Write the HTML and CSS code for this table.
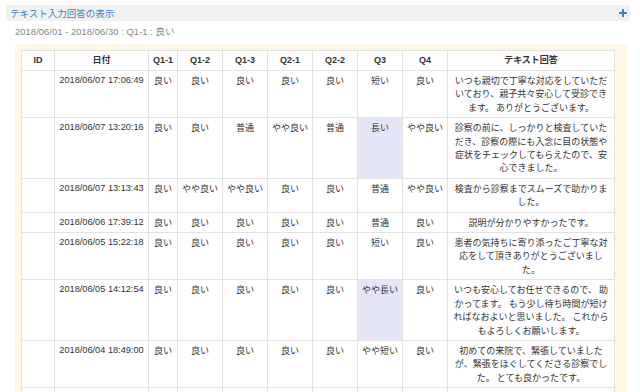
FILE: index.html
```html
<!DOCTYPE html>
<html lang="ja">
<head>
<meta charset="utf-8">
<link rel="stylesheet" href="styles.css">
</head>
<body>
<div class="panel-head">
  <span class="panel-title">テキスト入力回答の表示</span>
  <svg class="plus" width="8" height="8" viewBox="0 0 8 8"><rect x="3" y="0" width="2" height="8" fill="#3d82c4"/><rect x="0" y="3" width="8" height="2" fill="#3d82c4"/></svg>
</div>
<div class="subtitle">2018/06/01 - 2018/06/30 : Q1-1 : 良い</div>
<div class="box">
  <table class="answers">
    <colgroup>
      <col class="c-id"><col class="c-date"><col class="c-q11"><col class="c-q"><col class="c-q"><col class="c-q"><col class="c-q"><col class="c-q"><col class="c-q"><col>
    </colgroup>
    <thead>
      <tr><th>ID</th><th>日付</th><th>Q1-1</th><th>Q1-2</th><th>Q1-3</th><th>Q2-1</th><th>Q2-2</th><th>Q3</th><th>Q4</th><th>テキスト回答</th></tr>
    </thead>
    <tbody>
      <tr><td></td><td>2018/06/07 17:06:49</td><td>良い</td><td>良い</td><td>良い</td><td>良い</td><td>良い</td><td>短い</td><td>良い</td><td>いつも親切で丁寧な対応をしていただいており、親子共々安心して受診できます。 ありがとうございます。</td></tr>
      <tr><td></td><td>2018/06/07 13:20:16</td><td>良い</td><td>良い</td><td>普通</td><td>やや良い</td><td>普通</td><td class="hl">長い</td><td>やや良い</td><td>診察の前に、しっかりと検査していただき、診察の際にも入念に目の状態や症状をチェックしてもらえたので、安心できました。</td></tr>
      <tr><td></td><td>2018/06/07 13:13:43</td><td>良い</td><td>やや良い</td><td>やや良い</td><td>良い</td><td>良い</td><td>普通</td><td>やや良い</td><td>検査から診察までスムーズで助かりました。</td></tr>
      <tr><td></td><td>2018/06/06 17:39:12</td><td>良い</td><td>良い</td><td>良い</td><td>良い</td><td>良い</td><td>普通</td><td>良い</td><td>説明が分かりやすかったです。</td></tr>
      <tr><td></td><td>2018/06/05 15:22:18</td><td>良い</td><td>良い</td><td>良い</td><td>良い</td><td>良い</td><td>短い</td><td>良い</td><td>患者の気持ちに寄り添ったご丁寧な対応をして頂きありがとうございました。</td></tr>
      <tr><td></td><td>2018/06/05 14:12:54</td><td>良い</td><td>良い</td><td>良い</td><td>良い</td><td>良い</td><td class="hl">やや長い</td><td>良い</td><td>いつも安心してお任せできるので、 助かってます。 もう少し待ち時間が短ければなおよいと思いました。 これからもよろしくお願いします。</td></tr>
      <tr><td></td><td>2018/06/04 18:49:00</td><td>良い</td><td>良い</td><td>良い</td><td>良い</td><td>良い</td><td>やや短い</td><td>良い</td><td>初めての来院で、緊張していましたが、緊張をほぐしてくださる診察でした。 とても良かったです。</td></tr>
      <tr class="filler"><td></td><td></td><td></td><td></td><td></td><td></td><td></td><td></td><td></td><td></td></tr>
    </tbody>
  </table>
</div>
</body>
</html>
```
FILE: styles.css
```css
html, body {
  margin: 0;
  padding: 0;
  background: #fff;
  font-family: "Liberation Sans", "Noto Sans CJK JP", sans-serif;
  color: #333;
}
body {
  padding: 5px 10px 0 6px;
  overflow: hidden;
  height: 392px;
  box-sizing: border-box;
}
.panel-head {
  display: flex;
  align-items: center;
  justify-content: space-between;
  height: 16px;
  background: #f1f1f1;
  border-radius: 3px;
  padding: 0 3px 0 4px;
}
.panel-title {
  font-family: "Noto Sans CJK JP", sans-serif;
  font-size: 9.5px;
  color: #3d82c4;
  line-height: 16px;
}
.plus {
  display: block;
}
.subtitle {
  font-size: 9.5px;
  color: #888;
  margin: 5px 0 0 9px;
  line-height: 12px;
  font-family: "Liberation Sans", "Noto Sans CJK JP", sans-serif;
}
.box {
  margin: 6px 3px 0 9px;
  background: #fef7e6;
  padding: 6px 6px 0 6px;
}
.answers {
  width: 594px;
  table-layout: fixed;
  border-collapse: collapse;
  background: #fff;
  font-size: 9px;
  line-height: 13.4px;
}
.c-id { width: 33px; }
.c-date { width: 94px; }
.c-q11 { width: 29px; }
.c-q { width: 45px; }
.answers th, .answers td {
  border: 1px solid #e2e2e2;
  padding: 3px 4px;
  text-align: center;
  vertical-align: top;
  word-break: break-all;
}
.answers th {
  font-weight: bold;
  color: #333;
  padding: 3px 2px;
  line-height: 13px;
}
.answers td {
  font-family: "Noto Sans CJK JP", sans-serif;
}
.answers td:nth-child(2) {
  font-family: "Liberation Sans", sans-serif;
  font-size: 9.2px;
  padding: 3px 0;
  white-space: nowrap;
}
.answers td:nth-child(n+3):nth-child(-n+9) {
  padding: 3px 0;
}
.answers td:last-child {
  padding: 3px 5px;
}
.answers td.hl {
  background: #e5e5f8;
}
.answers .filler td {
  height: 30px;
}
```
